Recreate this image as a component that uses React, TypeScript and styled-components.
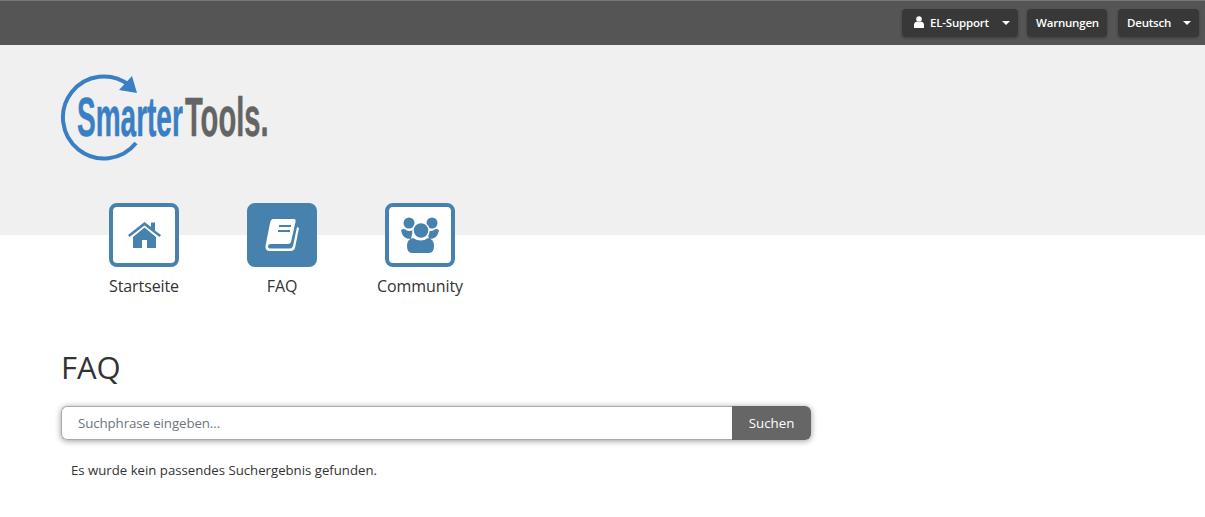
import React from "react";
import styled, { createGlobalStyle } from "styled-components";

const GlobalStyle = createGlobalStyle`
  html, body {
    margin: 0;
    padding: 0;
    background: #fff;
    font-family: "Open Sans", "Noto Sans", sans-serif;
    color: #333;
  }
`;

const TopBar = styled.div`
  height: 45px;
  box-sizing: border-box;
  background: #555;
  border-top: 1px solid #777;
  display: flex;
  justify-content: flex-end;
  align-items: flex-start;
  gap: 9px;
  padding: 8px 6px 0 0;
`;

const BarButton = styled.button<{ $width: number; $space?: number }>`
  width: ${(p) => p.$width}px;
  height: 28px;
  box-sizing: border-box;
  margin-left: ${(p) => p.$space || 0}px;
  padding: 0 8px 2px 9px;
  display: flex;
  align-items: center;
  border: 0;
  border-radius: 4px;
  background: #383838;
  box-shadow: 0 1px 3px rgba(0, 0, 0, 0.3);
  color: #fff;
  font-family: inherit;
  font-size: 11.5px;
  font-weight: 600;
  letter-spacing: -0.2px;
  white-space: nowrap;
`;

const Caret = styled.span`
  margin: 2px 0 0 auto;
  width: 0;
  height: 0;
  border-left: 4.5px solid transparent;
  border-right: 4.5px solid transparent;
  border-top: 4.5px solid #fff;
`;

const UserGlyph = styled.svg`
  width: 10px;
  height: 12px;
  margin: 0 6px 0 3px;
  fill: #fff;
`;

const Banner = styled.header`
  height: 190px;
  background: #f0f0f0;
  padding: 28px 0 0 60px;
  box-sizing: border-box;
`;

const LogoArt = styled.svg`
  display: block;
  width: 210px;
  height: 90px;
`;

const LogoWord = styled.text<{ $tone: string }>`
  font-family: "Liberation Sans", sans-serif;
  font-weight: 700;
  font-size: 56px;
  fill: ${(p) => p.$tone};
  stroke: ${(p) => p.$tone};
  stroke-width: 0.5px;
`;

const Nav = styled.nav`
  display: flex;
  margin: -32px 0 0 75px;
`;

const NavItem = styled.a`
  width: 138px;
  display: flex;
  flex-direction: column;
  align-items: center;
  font-size: 16px;
  letter-spacing: -0.1px;
  color: #333;
`;

const IconBox = styled.div<{ $active?: boolean }>`
  width: 70px;
  height: 64px;
  box-sizing: border-box;
  border: 4px solid #4682ad;
  border-radius: 8px;
  background: ${(p) => (p.$active ? "#4682ad" : "#fff")};
  display: flex;
  align-items: center;
  justify-content: center;
  margin-bottom: 8px;
`;

const Main = styled.main`
  padding: 48px 0 0 61px;
`;

const Title = styled.h1`
  margin: 0 0 17px;
  font-size: 31px;
  line-height: 44px;
  font-weight: 400;
  color: #333;
`;

const SearchRow = styled.div`
  width: 750px;
  height: 34px;
  display: flex;
  border-radius: 6px;
  box-shadow: 0 1px 6px rgba(0, 0, 0, 0.4);
`;

const SearchInput = styled.input`
  flex: 1;
  min-width: 0;
  box-sizing: border-box;
  padding: 0 16px;
  border: 1px solid #aaa;
  border-right: 0;
  border-radius: 6px 0 0 6px;
  outline: none;
  font-family: inherit;
  font-size: 13.3px;
  letter-spacing: -0.1px;
  &::placeholder {
    color: #6c757d;
    opacity: 1;
  }
`;

const SearchButton = styled.button`
  width: 79px;
  border: 0;
  border-radius: 0 6px 6px 0;
  background: #666;
  color: #fff;
  font-family: inherit;
  font-size: 13.3px;
`;

const Message = styled.p`
  margin: 21px 0 0 10px;
  font-size: 13.2px;
  line-height: 18px;
  color: #333;
`;

const Logo = () => (
  <LogoArt viewBox="0 0 210 90">
    <path
      d="M69 12 A41 41 0 1 0 76 70"
      fill="none"
      stroke="#3a7fc4"
      strokeWidth="4"
    />
    <path d="M72 3 L77 20 L59 17 Z" fill="#3a7fc4" />
    <LogoWord $tone="#3a7fc4" transform="translate(17 63) scale(0.5 1)">
      Smarter
    </LogoWord>
    <LogoWord $tone="#646464" transform="translate(125 63) scale(0.52 1)">
      Tools.
    </LogoWord>
  </LogoArt>
);

const HomeIcon = () => (
  <svg width="33" height="26" viewBox="0 0 33 26" fill="#4682ad">
    <path d="M16.5 0 L23 5 V0.5 H27 V8.5 L33 13 L31.5 15 L16.5 3.5 L1.5 15 L0 13 Z" />
    <path d="M5 15 L16.5 5.5 L28 15 V26 H19 V18 H14 V26 H5 Z" />
  </svg>
);

const BookIcon = () => (
  <svg width="34" height="32" viewBox="0 0 34 32">
    <path
      d="M8 0 H29 Q31 0 30.5 3 L26 23 Q25.5 25 23 25 H6 Q3 25 3 27.5 Q3 29.5 6 29.5 H25 Q27 29.5 28 27 L32 8 L34 9 L30 29 Q29 32 25 32 H5 Q0 32 0.5 27 L5 4 Q6 0 8 0 Z"
      fill="#fff"
    />
    <path d="M14 7 H26 M13 12 H25" stroke="#4682ad" strokeWidth="2" fill="none" />
  </svg>
);

const PeopleIcon = () => (
  <svg width="38" height="36" viewBox="0 0 38 36" fill="#4682ad">
    <circle cx="8" cy="6" r="5.5" />
    <circle cx="31" cy="6" r="5.5" />
    <path d="M0 13 Q3 11 5 13 Q8 15 12 13 L10 22 Q1 22 0 13 Z" />
    <path d="M38 13 Q35 11 33 13 Q30 15 26 13 L28 22 Q37 22 38 13 Z" />
    <circle cx="20" cy="13.5" r="8" stroke="#fff" strokeWidth="1.5" />
    <path d="M6 29 Q6 22 12 21 Q20 26 27 21 Q33 22 33 29 Q33 36 28 36 H11 Q6 36 6 29 Z" />
  </svg>
);

const App: React.FC = () => {
  return (
    <>
      <GlobalStyle />
      <TopBar>
        <BarButton $width={116}>
          <UserGlyph viewBox="0 0 10 12">
            <circle cx="5" cy="3" r="2.8" />
            <path d="M0 12 V9 Q0 6 3 5.5 Q5 7 7 5.5 Q10 6 10 9 V12 Z" />
          </UserGlyph>
          EL-Support
          <Caret />
        </BarButton>
        <BarButton $width={80}>Warnungen</BarButton>
        <BarButton $width={81} $space={2}>
          Deutsch
          <Caret />
        </BarButton>
      </TopBar>
      <Banner>
        <Logo />
      </Banner>
      <Nav>
        <NavItem>
          <IconBox>
            <HomeIcon />
          </IconBox>
          Startseite
        </NavItem>
        <NavItem>
          <IconBox $active>
            <BookIcon />
          </IconBox>
          FAQ
        </NavItem>
        <NavItem>
          <IconBox>
            <PeopleIcon />
          </IconBox>
          Community
        </NavItem>
      </Nav>
      <Main>
        <Title>FAQ</Title>
        <SearchRow>
          <SearchInput placeholder="Suchphrase eingeben..." />
          <SearchButton>Suchen</SearchButton>
        </SearchRow>
        <Message>Es wurde kein passendes Suchergebnis gefunden.</Message>
      </Main>
    </>
  );
};

export default App;
